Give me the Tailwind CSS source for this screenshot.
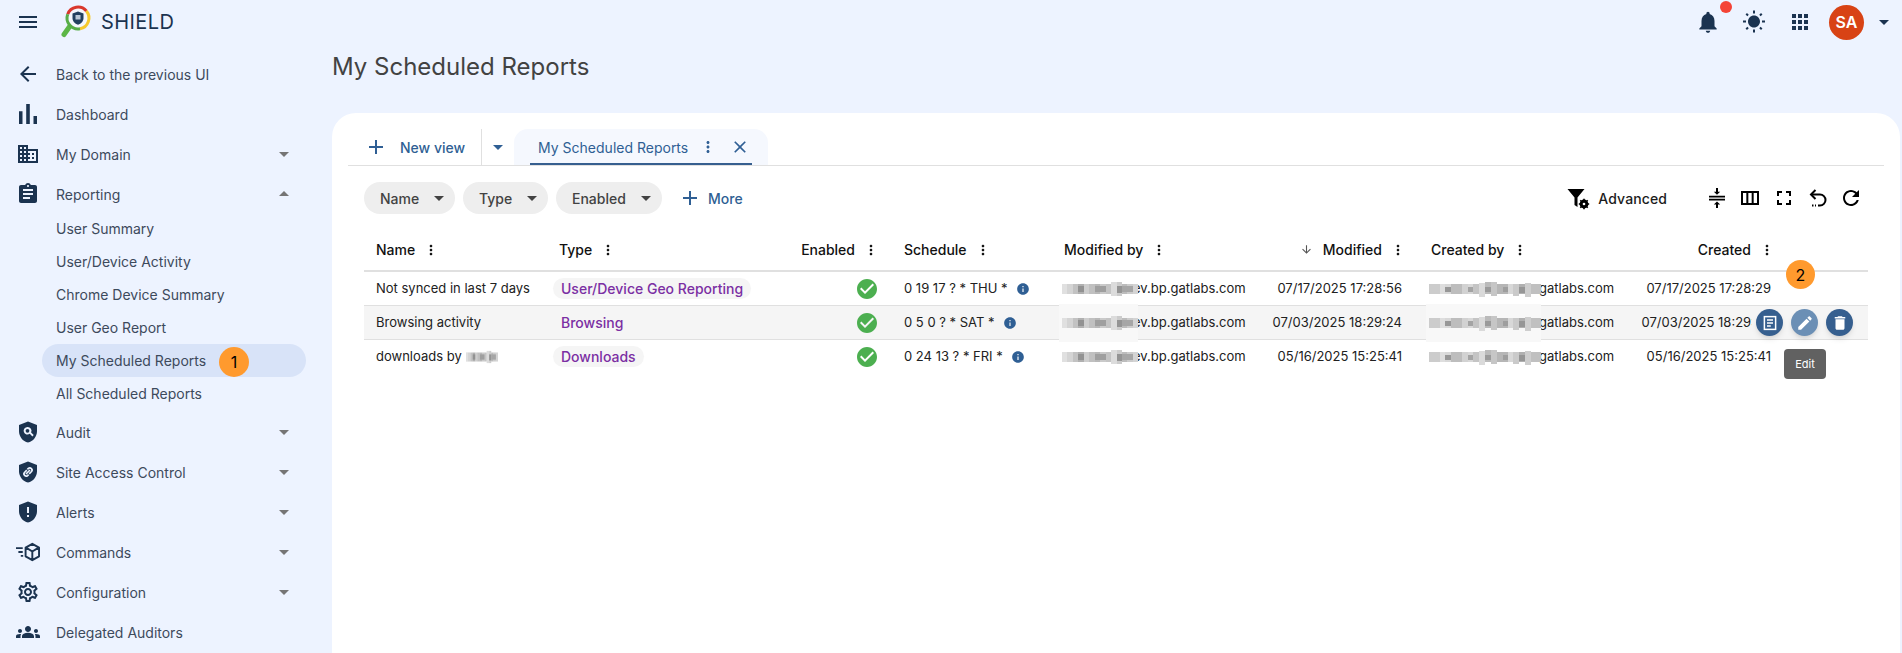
<!DOCTYPE html>
<html lang="en">
  <head>
    <meta charset="UTF-8" />
    <title>SHIELD - My Scheduled Reports</title>
    <script src="https://cdn.jsdelivr.net/npm/@tailwindcss/browser@4"></script>
  </head>
  <body class="h-[653px] overflow-hidden bg-[#edf3ff] font-['Inter','Noto_Sans',sans-serif] text-[#3d4a5c] antialiased">
    <!-- shared icons -->
    <svg class="hidden">
      <symbol id="kebab" viewBox="0 0 24 24"><path d="M12 8c1.100 0 2-.9 2-2s-.9-2-2-2-2 .9-2 2 .9 2 2 2zm0 2c-1.100 0-2 .9-2 2s.9 2 2 2 2-.9 2-2-.9-2-2-2zm0 6c-1.100 0-2 .9-2 2s.9 2 2 2 2-.9 2-2-.9-2-2-2z"/></symbol>
      <symbol id="caret" viewBox="0 0 24 24"><path d="M7 10l5 5 5-5z"/></symbol>
      <symbol id="caret-up" viewBox="0 0 24 24"><path d="M7 14l5-5 5 5z"/></symbol>
      <symbol id="plus" viewBox="0 0 24 24"><path d="M19 13h-6v6h-2v-6H5v-2h6V5h2v6h6v2z"/></symbol>
      <symbol id="check" viewBox="0 0 24 24"><path d="M12 2C6.480 2 2 6.480 2 12s4.480 10 10 10 10-4.480 10-10S17.520 2 12 2zm-2 15l-5-5 1.410-1.410L10 14.170l7.590-7.590L19 8l-9 9z"/></symbol>
      <symbol id="info" viewBox="0 0 24 24"><path d="M12 2C6.480 2 2 6.480 2 12s4.480 10 10 10 10-4.480 10-10S17.520 2 12 2zm1 15h-2v-6h2v6zm0-8h-2V7h2v2z"/></symbol>
      <!-- pixelated email blur -->
      <symbol id="blur-a" viewBox="0 0 76 16" preserveAspectRatio="none">
        <rect y="3" width="76" height="10" fill="#dcdcdc"/>
        <rect x="0" y="3" width="5" height="10" fill="#e0e0e0"/><rect x="5" y="3" width="6" height="10" fill="#d4d4d4"/><rect x="11" y="3" width="5" height="10" fill="#c2c2c2"/><rect x="16" y="3" width="6" height="10" fill="#b0b0b0"/><rect x="22" y="3" width="5" height="10" fill="#cecece"/><rect x="27" y="3" width="6" height="10" fill="#c0c0c0"/><rect x="33" y="3" width="5" height="10" fill="#b8b8b8"/><rect x="38" y="3" width="6" height="10" fill="#cacaca"/><rect x="44" y="3" width="5" height="10" fill="#c4c4c4"/><rect x="49" y="1" width="6" height="14" fill="#dcdcdc"/><rect x="55" y="1" width="5" height="14" fill="#cccccc"/><rect x="60" y="3" width="5" height="10" fill="#bcbcbc"/><rect x="65" y="3" width="6" height="10" fill="#cccccc"/><rect x="71" y="3" width="5" height="10" fill="#d4d4d4"/>
        <rect x="16" y="5" width="6" height="6" fill="#929292"/><rect x="33" y="5" width="11" height="6" fill="#9f9f9f"/><rect x="55" y="5" width="5" height="7" fill="#949494"/><rect x="60" y="5" width="11" height="6" fill="#a6a6a6"/>
      </symbol>
      <symbol id="blur-b" viewBox="0 0 112 16" preserveAspectRatio="none">
        <rect y="3" width="112" height="10" fill="#d8d8d8"/>
        <rect x="0" y="3" width="11" height="10" fill="#cccccc"/><rect x="11" y="3" width="5" height="10" fill="#dedede"/><rect x="22" y="3" width="11" height="10" fill="#bdbdbd"/><rect x="33" y="3" width="6" height="10" fill="#d2d2d2"/><rect x="44" y="3" width="6" height="10" fill="#c4c4c4"/><rect x="50" y="2" width="6" height="14" fill="#dadada"/><rect x="56" y="1" width="6" height="12" fill="#bababa"/><rect x="62" y="1" width="6" height="14" fill="#c6c6c6"/><rect x="68" y="3" width="11" height="10" fill="#b6b6b6"/><rect x="84" y="3" width="6" height="12" fill="#cacaca"/><rect x="90" y="3" width="6" height="10" fill="#b0b0b0"/><rect x="96" y="2" width="6" height="14" fill="#cecece"/><rect x="102" y="3" width="10" height="10" fill="#c0c0c0"/>
        <rect x="16" y="6" width="6" height="5" fill="#979797"/><rect x="39" y="6" width="5" height="5" fill="#a4a4a4"/><rect x="56" y="6" width="6" height="5" fill="#9a9a9a"/><rect x="74" y="6" width="5" height="5" fill="#9e9e9e"/><rect x="90" y="6" width="6" height="6" fill="#969696"/>
      </symbol>
    </svg>

    <!-- Top bar -->
    <header class="flex h-[44px] items-center pl-[16px] pr-[6px] text-[#1b3350]">
      <svg class="h-6 w-6" viewBox="0 0 24 24" fill="currentColor"><path d="M3 18h18v-2H3v2zm0-5h18v-2H3v2zm0-7v2h18V6H3z"/></svg>
      <!-- logo -->
      <svg class="ml-[20px] h-[34px] w-[34px]" viewBox="0 0 34 34" fill="none">
        <path d="M10 21L4 29.500" stroke="#5cb647" stroke-width="5" stroke-linecap="round"/>
        <circle cx="18" cy="13" r="10" fill="#f4f7fd"/>
        <path d="M7.700 9.200A11 11 0 0 1 26.400 6" stroke="#d9372c" stroke-width="3"/>
        <path d="M26.400 6A11 11 0 0 1 20 23.800" stroke="#f6c92c" stroke-width="3"/>
        <path d="M20 23.800A11 11 0 0 1 7.700 9.200" stroke="#57ad48" stroke-width="3"/>
        <path d="M18 6.500l5.500 2v4.500c0 3.300-2.300 5.700-5.500 6.700-3.200-1-5.500-3.400-5.500-6.700V8.500z" fill="#22405f"/>
        <rect x="15.500" y="10" width="5" height="4.500" fill="#b9c7d6"/>
      </svg>
      <span class="ml-[7px] text-[20px] leading-none tracking-[0.4px]">SHIELD</span>

      <div class="ml-auto flex items-center">
        <div class="relative">
          <svg class="h-[26px] w-[26px]" viewBox="0 0 24 24" fill="currentColor"><path d="M12 22c1.100 0 2-.9 2-2h-4c0 1.100.9 2 2 2zm6-6v-5c0-3.070-1.630-5.640-4.500-6.320V4c0-.83-.67-1.500-1.500-1.500s-1.500.67-1.500 1.500v.68C7.640 5.360 6 7.920 6 11v5l-2 2v1h16v-1l-2-2z"/></svg>
          <span class="absolute -right-[11px] -top-[8px] h-3 w-3 rounded-full bg-[#f44336]"></span>
        </div>
        <svg class="ml-[21px] h-6 w-6" viewBox="0 0 24 24" fill="currentColor"><path d="M6.760 4.840l-1.800-1.790-1.410 1.410 1.790 1.790 1.420-1.410zM4 10.500H1v2h3v-2zm9-9.950h-2V3.500h2V.55zm7.450 3.910l-1.410-1.410-1.790 1.790 1.410 1.410 1.790-1.790zm-3.210 13.700l1.790 1.800 1.410-1.410-1.800-1.790-1.400 1.400zM20 10.500v2h3v-2h-3zm-8-5c-3.310 0-6 2.690-6 6s2.690 6 6 6 6-2.690 6-6-2.690-6-6-6zm-1 16.950h2V19.500h-2v2.950zm-7.450-3.910l1.410 1.410 1.790-1.800-1.410-1.410-1.790 1.800z"/></svg>
        <svg class="ml-[22px] h-6 w-6" viewBox="0 0 24 24" fill="currentColor"><path d="M4 8h4V4H4v4zm6 12h4v-4h-4v4zm-6 0h4v-4H4v4zm0-6h4v-4H4v4zm6 0h4v-4h-4v4zm6-10v4h4V4h-4zm-6 4h4V4h-4v4zm6 6h4v-4h-4v4zm0 6h4v-4h-4v4z"/></svg>
        <div class="ml-[17px] flex h-[35px] w-[35px] items-center justify-center rounded-full bg-[#d84315] text-[16px] font-semibold text-white">SA</div>
        <svg class="ml-[8px] h-6 w-6 fill-current"><use href="#caret"/></svg>
      </div>
    </header>

    <div class="flex h-[609px]">
      <!-- Sidebar -->
      <aside class="w-[332px] shrink-0 pt-[10px] text-[14px]">
        <a class="flex h-10 items-center pl-[16px]"><svg class="h-6 w-6 text-[#1b3350]" viewBox="0 0 24 24" fill="currentColor"><path d="M20 11H7.830l5.590-5.590L12 4l-8 8 8 8 1.410-1.410L7.830 13H20v-2z"/></svg><span class="ml-[16px]">Back to the previous UI</span></a>
        <a class="flex h-10 items-center pl-[16px]"><svg class="h-6 w-6 text-[#1b3350]" viewBox="0 0 24 24" fill="currentColor"><path d="M3 9.200h3.500V22H3zM10.200 2h3.600v20h-3.600zM17.500 14H21v8h-3.500z"/></svg><span class="ml-[16px]">Dashboard</span></a>
        <a class="flex h-10 items-center pl-[16px]"><svg class="h-6 w-6 text-[#1b3350]" viewBox="0 0 24 24" fill="currentColor"><path d="M12 7V3H2v18h20V7H12zM6 19H4v-2h2v2zm0-4H4v-2h2v2zm0-4H4V9h2v2zm0-4H4V5h2v2zm4 12H8v-2h2v2zm0-4H8v-2h2v2zm0-4H8V9h2v2zm0-4H8V5h2v2zm10 12h-8v-2h2v-2h-2v-2h2v-2h-2V9h8v10zm-2-8h-2v2h2v-2zm0 4h-2v2h2v-2z"/></svg><span class="ml-[16px]">My Domain</span><svg class="ml-auto mr-[36px] h-6 w-6 fill-[#757575]"><use href="#caret"/></svg></a>
        <a class="flex h-10 items-center pl-[16px]"><svg class="h-6 w-6 text-[#1b3350]" viewBox="0 0 24 24" fill="currentColor"><path d="M19 3h-4.180C14.400 1.840 13.300 1 12 1c-1.300 0-2.400.84-2.820 2H5c-1.100 0-2 .9-2 2v14c0 1.100.9 2 2 2h14c1.100 0 2-.9 2-2V5c0-1.100-.9-2-2-2zm-7 0c.55 0 1 .45 1 1s-.45 1-1 1-1-.45-1-1 .45-1 1-1zm2 14H7v-2h7v2zm3-4H7v-2h10v2zm0-4H7V7h10v2z"/></svg><span class="ml-[16px]">Reporting</span><svg class="ml-auto mr-[36px] h-6 w-6 fill-[#757575]"><use href="#caret-up"/></svg></a>

        <div class="-mt-[2px] mb-[2px]">
          <a class="flex h-[33px] items-center pl-[56px]">User Summary</a>
          <a class="flex h-[33px] items-center pl-[56px]">User/Device Activity</a>
          <a class="flex h-[33px] items-center pl-[56px]">Chrome Device Summary</a>
          <a class="flex h-[33px] items-center pl-[56px]">User Geo Report</a>
          <a class="relative ml-[42px] flex h-[33px] w-[264px] items-center rounded-full bg-[#d8e3f8] pl-[14px]">My Scheduled Reports
            <span class="absolute left-[177px] top-[3px] flex h-[30px] w-[30px] items-center justify-center rounded-full bg-[#ff9a2e] text-[16px] text-black">1</span>
          </a>
          <a class="flex h-[33px] items-center pl-[56px]">All Scheduled Reports</a>
        </div>

        <a class="flex h-10 items-center pl-[16px]"><svg class="h-6 w-6 text-[#1b3350]" viewBox="0 0 24 24" fill="currentColor"><path fill-rule="evenodd" d="M12 1.500L3 5v6.200C3 16.500 6.800 21.400 12 22.500c5.200-1.100 9-6 9-11.300V5zM11.500 7a3.800 3.800 0 1 0 2.300 6.800l2.600 2.600 1.300-1.300-2.600-2.600A3.800 3.800 0 0 0 11.500 7zm0 1.900a1.900 1.900 0 1 1 0 3.800 1.900 1.900 0 0 1 0-3.800z"/></svg><span class="ml-[16px]">Audit</span><svg class="ml-auto mr-[36px] h-6 w-6 fill-[#757575]"><use href="#caret"/></svg></a>
        <a class="flex h-10 items-center pl-[16px]"><svg class="h-6 w-6 text-[#1b3350]" viewBox="0 0 24 24" fill="none"><path fill="currentColor" d="M12 1.500L3 5v6.200C3 16.500 6.800 21.400 12 22.500c5.200-1.100 9-6 9-11.300V5z"/><path stroke="#edf3ff" stroke-width="1.700" d="M10.800 10.200l-2.300 2.300a2.200 2.200 0 0 0 3.100 3.100l1-1M13.200 13.800l2.300-2.300a2.200 2.200 0 0 0-3.100-3.100l-1 1M10 14l4-4"/></svg><span class="ml-[16px]">Site Access Control</span><svg class="ml-auto mr-[36px] h-6 w-6 fill-[#757575]"><use href="#caret"/></svg></a>
        <a class="flex h-10 items-center pl-[16px]"><svg class="h-6 w-6 text-[#1b3350]" viewBox="0 0 24 24" fill="currentColor"><path fill-rule="evenodd" d="M12 1.500L3 5v6.200C3 16.500 6.800 21.400 12 22.500c5.200-1.100 9-6 9-11.300V5zM11 7h2v6h-2zm0 8h2v2h-2z"/></svg><span class="ml-[16px]">Alerts</span><svg class="ml-auto mr-[36px] h-6 w-6 fill-[#757575]"><use href="#caret"/></svg></a>
        <a class="flex h-10 items-center pl-[16px]"><svg class="h-6 w-6 text-[#1b3350]" viewBox="0 0 25 25" fill="none" stroke="currentColor" stroke-width="2"><path d="M0 8.500h7M2.500 12.500h4.500M5 16.500h2.500"/><path stroke-linejoin="round" d="M17 4l7 4v9l-7 4-7-4V8zM10.500 8l6.500 4 6.500-4M17 12v8.500"/></svg><span class="ml-[16px]">Commands</span><svg class="ml-auto mr-[36px] h-6 w-6 fill-[#757575]"><use href="#caret"/></svg></a>
        <a class="flex h-10 items-center pl-[16px]"><svg class="h-6 w-6 text-[#1b3350]" viewBox="0 0 24 24" fill="currentColor"><path d="M19.430 12.980c.04-.32.07-.64.07-.98 0-.34-.03-.66-.07-.98l2.110-1.650c.19-.15.24-.42.12-.64l-2-3.460c-.09-.16-.26-.25-.44-.25-.06 0-.12.01-.17.03l-2.490 1c-.52-.4-1.080-.73-1.690-.98l-.38-2.650C14.460 2.180 14.250 2 14 2h-4c-.25 0-.46.18-.49.42l-.38 2.650c-.61.25-1.170.59-1.690.98l-2.490-1c-.06-.02-.12-.03-.18-.03-.17 0-.34.09-.43.25l-2 3.460c-.13.22-.07.49.12.64l2.110 1.650c-.04.32-.07.65-.07.98 0 .33.03.66.07.98l-2.110 1.650c-.19.15-.24.42-.12.64l2 3.460c.09.16.26.25.44.25.06 0 .12-.01.17-.03l2.490-1c.52.4 1.080.73 1.690.98l.38 2.650c.03.24.24.42.49.42h4c.25 0 .46-.18.49-.42l.38-2.650c.61-.25 1.170-.59 1.690-.98l2.490 1c.06.02.12.03.18.03.17 0 .34-.09.43-.25l2-3.460c.12-.22.07-.49-.12-.64l-2.110-1.650zm-1.980-1.710c.04.31.05.52.05.73 0 .21-.02.43-.05.73l-.14 1.130.89.7 1.080.84-.7 1.210-1.270-.51-1.040-.42-.9.68c-.43.32-.84.56-1.250.73l-1.060.43-.16 1.130-.2 1.350h-1.400l-.19-1.350-.16-1.130-1.060-.43c-.43-.18-.83-.41-1.230-.71l-.91-.7-1.060.43-1.270.51-.7-1.210 1.080-.84.89-.7-.14-1.130c-.03-.31-.05-.54-.05-.74s.02-.43.05-.73l.14-1.130-.89-.7-1.080-.84.7-1.210 1.270.51 1.040.42.9-.68c.43-.32.84-.56 1.250-.73l1.060-.43.16-1.130.2-1.350h1.390l.19 1.350.16 1.130 1.060.43c.43.18.83.41 1.230.71l.91.7 1.060-.43 1.270-.51.7 1.210-1.070.85-.89.7.14 1.130zM12 8c-2.210 0-4 1.790-4 4s1.790 4 4 4 4-1.790 4-4-1.790-4-4-4zm0 6c-1.100 0-2-.9-2-2s.9-2 2-2 2 .9 2 2-.9 2-2 2z"/></svg><span class="ml-[16px]">Configuration</span><svg class="ml-auto mr-[36px] h-6 w-6 fill-[#757575]"><use href="#caret"/></svg></a>
        <a class="flex h-10 items-center pl-[16px]"><svg class="h-6 w-6 text-[#1b3350]" viewBox="0 0 24 24" fill="currentColor"><path d="M12 12.750c1.630 0 3.070.39 4.240.9 1.080.48 1.760 1.560 1.760 2.730V18H6v-1.610c0-1.180.68-2.260 1.760-2.730 1.170-.52 2.610-.91 4.240-.91zM4 13c1.100 0 2-.9 2-2s-.9-2-2-2-2 .9-2 2 .9 2 2 2zm1.130 1.100c-.37-.06-.74-.1-1.130-.1-.99 0-1.930.21-2.780.58C.48 14.900 0 15.620 0 16.430V18h4.500v-1.610c0-.83.23-1.610.63-2.290zM20 13c1.100 0 2-.9 2-2s-.9-2-2-2-2 .9-2 2 .9 2 2 2zm4 3.430c0-.81-.48-1.530-1.220-1.850-.85-.37-1.790-.58-2.780-.58-.39 0-.76.04-1.130.1.4.68.63 1.460.63 2.290V18H24v-1.570zM12 6c1.660 0 3 1.340 3 3s-1.340 3-3 3-3-1.340-3-3 1.340-3 3-3z"/></svg><span class="ml-[16px]">Delegated Auditors</span></a>
      </aside>

      <!-- Main -->
      <main class="min-w-0 flex-1 pr-[2px]">
        <h1 class="flex h-[69px] items-center pb-[23px] text-[24px] font-normal leading-none text-[#424242]">My Scheduled Reports</h1>

        <section class="h-[540px] rounded-t-[24px] bg-white px-[16px] pt-[16px]">
          <!-- Tabs -->
          <div class="flex h-[37px] items-stretch border-b border-[#e0e0e0] text-[14px] text-[#2f5f94]">
            <div class="flex items-center pl-[16px] pr-[16px]">
              <svg class="h-6 w-6 fill-current"><use href="#plus"/></svg>
              <span class="ml-[12px] font-[450]">New view</span>
            </div>
            <div class="flex w-[33px] items-center justify-center border-l border-[#e0e0e0]"><svg class="h-6 w-6 fill-current"><use href="#caret"/></svg></div>
            <div class="relative flex w-[254px] items-center rounded-t-[14px] bg-[#f5f8fe] pl-[24px]">
              <span>My Scheduled Reports</span>
              <svg class="ml-[11px] h-[18px] w-[18px] fill-current"><use href="#kebab"/></svg>
              <svg class="ml-[13px] h-5 w-5" viewBox="0 0 24 24" fill="currentColor"><path d="M19 6.410L17.590 5 12 10.590 6.410 5 5 6.410 10.590 12 5 17.590 6.410 19 12 13.410 17.590 19 19 17.590 13.410 12z"/></svg>
              <span class="absolute bottom-0 left-[16px] right-[16px] h-[2px] bg-[#365f8f]"></span>
            </div>
          </div>

          <!-- Filters -->
          <div class="mt-[16px] flex h-[32px] items-center pl-[16px] pr-[21px] text-[14px]">
            <button class="flex h-[32px] w-[91px] items-center rounded-full bg-[#eeeeee] pl-[16px] font-[450] text-[#424242]">Name<svg class="ml-auto mr-[4px] h-6 w-6 fill-current"><use href="#caret"/></svg></button>
            <button class="ml-[8px] flex h-[32px] w-[85px] items-center rounded-full bg-[#eeeeee] pl-[16px] font-[450] text-[#424242]">Type<svg class="ml-auto mr-[4px] h-6 w-6 fill-current"><use href="#caret"/></svg></button>
            <button class="ml-[8px] flex h-[32px] w-[106px] items-center rounded-full bg-[#eeeeee] pl-[16px] font-[450] text-[#424242]">Enabled<svg class="ml-auto mr-[4px] h-6 w-6 fill-current"><use href="#caret"/></svg></button>
            <div class="ml-[16px] flex items-center font-[450] text-[#2f5f94]"><svg class="h-6 w-6 fill-current"><use href="#plus"/></svg><span class="ml-[6px]">More</span></div>

            <div class="ml-auto flex items-center text-black">
              <svg class="h-[24px] w-[24px]" viewBox="0 0 24 24" fill="currentColor"><path d="M1.500 3h17l-7 8.500V21l-3-2v-7.500z"/><circle cx="18" cy="18" r="3.200" fill="none" stroke="currentColor" stroke-width="2.400"/><path stroke="currentColor" stroke-width="1.600" d="M18 12.800v10.400M12.800 18h10.400M14.300 14.300l7.400 7.400M21.700 14.300l-7.400 7.400"/><circle cx="18" cy="18" r="1.300" fill="#fff"/></svg>
              <span class="ml-[8px] text-[14px] font-[450] tracking-[0.1px] text-[#1c1c1c]">Advanced</span>
              <svg class="ml-[38px] h-6 w-6" viewBox="0 0 24 24" fill="currentColor"><path d="M4 9.800h16v1.700H4zM4 12.800h16v1.700H4zM12 8.800L8.800 5.800h2.200V2h2v3.800h2.200zM12 15.500l3.200 3H13V22h-2v-3.500H8.800z"/></svg>
              <svg class="ml-[9px] h-6 w-6" viewBox="0 0 24 24" fill="currentColor"><path d="M3 5v14h18V5H3zm5.330 12H5V7h3.330v10zm5.340 0h-3.330V7h3.330v10zM19 17h-3.330V7H19v10z"/></svg>
              <svg class="ml-[10px] h-6 w-6" viewBox="0 0 24 24" fill="currentColor"><path d="M7 14H5v5h5v-2H7v-3zm-2-4h2V7h3V5H5v5zm12 7h-3v2h5v-5h-2v3zM14 5v2h3v3h2V5h-5z"/></svg>
              <svg class="ml-[10px] h-6 w-6" viewBox="0 0 24 24" fill="none" stroke="currentColor" stroke-width="2"><path d="M9.500 4L5 8.500 9.500 13"/><path d="M5 8.500h9a5.500 5.500 0 0 1 0 11h-2" /><path d="M6 19.500h1.500M9 19.500h1" /></svg>
              <svg class="ml-[9px] h-6 w-6" viewBox="0 0 24 24" fill="currentColor"><path d="M17.650 6.350C16.200 4.900 14.210 4 12 4c-4.420 0-7.990 3.580-7.990 8s3.570 8 7.990 8c3.730 0 6.840-2.550 7.730-6h-2.080c-.82 2.330-3.040 4-5.650 4-3.310 0-6-2.690-6-6s2.690-6 6-6c1.660 0 3.140.69 4.220 1.780L13 11h7V4l-2.350 2.350z"/></svg>
            </div>
          </div>

          <!-- Table -->
          <div class="relative mx-[16px] mt-[15px] text-[13px] text-[#212121]">
            <div class="grid h-[43px] grid-cols-[183px_232px_113px_160px_200px_167px_204px_160px_85px] items-center border-b-2 border-[#e0e0e0] text-[14px] font-[450] text-[#111]">
              <div class="flex items-center gap-[8px] pl-[12px]">Name<svg class="h-4 w-4 fill-current"><use href="#kebab"/></svg></div>
              <div class="flex items-center gap-[8px] pl-[12px]">Type<svg class="h-4 w-4 fill-current"><use href="#kebab"/></svg></div>
              <div class="flex items-center justify-end gap-[8px] pr-[13px]">Enabled<svg class="h-4 w-4 fill-current"><use href="#kebab"/></svg></div>
              <div class="flex items-center gap-[8px] pl-[12px]">Schedule<svg class="h-4 w-4 fill-current"><use href="#kebab"/></svg></div>
              <div class="flex items-center gap-[8px] pl-[12px]">Modified by<svg class="h-4 w-4 fill-current"><use href="#kebab"/></svg></div>
              <div class="flex items-center justify-end gap-[8px] pr-[13px]"><svg class="mr-[2px] h-[13px] w-[13px]" viewBox="0 0 24 24" fill="#555"><path d="M20 12l-1.410-1.410L13 16.170V4h-2v12.170l-5.580-5.590L4 12l8 8 8-8z"/></svg>Modified<svg class="h-4 w-4 fill-current"><use href="#kebab"/></svg></div>
              <div class="flex items-center gap-[8px] pl-[12px]">Created by<svg class="h-4 w-4 fill-current"><use href="#kebab"/></svg></div>
              <div class="flex items-center justify-end gap-[8px] pr-[8px]">Created<svg class="h-4 w-4 fill-current"><use href="#kebab"/></svg></div>
              <div></div>
            </div>

            <div class="grid h-[34px] grid-cols-[183px_232px_113px_160px_200px_167px_204px_160px_85px] items-center border-b border-[#e0e0e0]">
              <div class="pl-[12px]">Not synced in last 7 days</div>
              <div class="pl-[6px]"><span class="inline-flex h-[21px] items-center rounded-full bg-[#f5f5f5] px-[8px] text-[14px] font-[450] text-[#7b2fa3]">User/Device Geo Reporting</span></div>
              <div class="flex justify-end pr-[13px]"><svg class="h-6 w-6 fill-[#4caf50]"><use href="#check"/></svg></div>
              <div class="flex items-center gap-[8px] pl-[12px]">0 19 17 ? * THU *<svg class="h-[14px] w-[14px] fill-[#2f5f94]"><use href="#info"/></svg></div>
              <div class="flex items-center pl-[10px]"><svg class="relative h-4 w-[76px]"><use href="#blur-a"/></svg><span class="-ml-[5px]">ev.bp.gatlabs.com</span></div>
              <div class="pr-[17px] text-right">07/17/2025 17:28:56</div>
              <div class="flex items-center pl-[10px]"><svg class="relative h-4 w-[112px]"><use href="#blur-b"/></svg><span class="-ml-[2px]">gatlabs.com</span></div>
              <div class="pr-[12px] text-right">07/17/2025 17:28:29</div>
              <div></div>
            </div>

            <div class="relative grid h-[34px] grid-cols-[183px_232px_113px_160px_200px_167px_204px_160px_85px] items-center border-b border-[#e0e0e0] bg-[#f5f5f5]">
              <div class="pl-[12px]">Browsing activity</div>
              <div class="pl-[6px]"><span class="inline-flex h-[21px] items-center rounded-full bg-[#f5f5f5] px-[8px] text-[14px] font-[450] text-[#7b2fa3]">Browsing</span></div>
              <div class="flex justify-end pr-[13px]"><svg class="h-6 w-6 fill-[#4caf50]"><use href="#check"/></svg></div>
              <div class="flex items-center gap-[8px] pl-[12px]">0 5 0 ? * SAT *<svg class="h-[14px] w-[14px] fill-[#2f5f94]"><use href="#info"/></svg></div>
              <div class="relative flex items-center pl-[10px]"><span class="absolute left-[7px] top-1/2 h-[38px] w-[79px] -translate-y-1/2 bg-[#f8f8f8]"></span><svg class="relative h-4 w-[76px]"><use href="#blur-a"/></svg><span class="-ml-[5px]">ev.bp.gatlabs.com</span></div>
              <div class="pr-[17px] text-right">07/03/2025 18:29:24</div>
              <div class="relative flex items-center pl-[10px]"><span class="absolute left-[7px] top-1/2 h-[38px] w-[115px] -translate-y-1/2 bg-[#f8f8f8]"></span><svg class="relative h-4 w-[112px]"><use href="#blur-b"/></svg><span class="-ml-[2px]">gatlabs.com</span></div>
              <div class="pr-[12px] text-right">07/03/2025 18:29:24</div>
              <div></div>
              <!-- row actions, shown on hover -->
              <div class="absolute bottom-0 right-0 top-0 flex w-[116px] items-center gap-[8px] bg-[#f5f5f5] pl-[4px]">
                <span class="flex h-[27px] w-[27px] items-center justify-center rounded-full bg-[#365f8f] shadow-md"><svg class="h-[18px] w-[18px]" viewBox="0 0 24 24" fill="none" stroke="#fff" stroke-width="2"><rect x="4.500" y="3.500" width="15" height="17"/><path d="M8 8h8M8 12h8M8 16h5"/></svg></span>
                <span class="flex h-[27px] w-[27px] items-center justify-center rounded-full bg-[#6b8fb5] shadow-md"><svg class="h-[18px] w-[18px]" viewBox="0 0 24 24" fill="#fff"><path d="M3 17.250V21h3.750L17.810 9.940l-3.750-3.750L3 17.250zM20.710 7.040c.39-.39.39-1.020 0-1.410l-2.340-2.340c-.39-.39-1.020-.39-1.410 0l-1.830 1.830 3.750 3.750 1.830-1.830z"/></svg></span>
                <span class="flex h-[27px] w-[27px] items-center justify-center rounded-full bg-[#365f8f] shadow-md"><svg class="h-[18px] w-[18px]" viewBox="0 0 24 24" fill="#fff"><path d="M6 19c0 1.100.9 2 2 2h8c1.100 0 2-.9 2-2V7H6v12zM19 4h-3.500l-1-1h-5l-1 1H5v2h14V4z"/></svg></span>
              </div>
            </div>

            <div class="grid h-[34px] grid-cols-[183px_232px_113px_160px_200px_167px_204px_160px_85px] items-center">
              <div class="flex items-center pl-[12px]">downloads by <svg class="ml-[4px] h-[14px] w-[32px]"><use href="#blur-a"/></svg></div>
              <div class="pl-[6px]"><span class="inline-flex h-[21px] items-center rounded-full bg-[#f5f5f5] px-[8px] text-[14px] font-[450] text-[#7b2fa3]">Downloads</span></div>
              <div class="flex justify-end pr-[13px]"><svg class="h-6 w-6 fill-[#4caf50]"><use href="#check"/></svg></div>
              <div class="flex items-center gap-[8px] pl-[12px]">0 24 13 ? * FRI *<svg class="h-[14px] w-[14px] fill-[#2f5f94]"><use href="#info"/></svg></div>
              <div class="flex items-center pl-[10px]"><svg class="relative h-4 w-[76px]"><use href="#blur-a"/></svg><span class="-ml-[5px]">ev.bp.gatlabs.com</span></div>
              <div class="pr-[17px] text-right">05/16/2025 15:25:41</div>
              <div class="flex items-center pl-[10px]"><svg class="relative h-4 w-[112px]"><use href="#blur-b"/></svg><span class="-ml-[2px]">gatlabs.com</span></div>
              <div class="pr-[12px] text-right">05/16/2025 15:25:41</div>
              <div></div>
            </div>

            <!-- tooltip and callout over the table -->
            <div class="absolute left-[1420px] top-[120px] flex h-[30px] w-[42px] items-center justify-center rounded-[4px] bg-[#616161] text-[11px] text-white">Edit</div>
            <div class="absolute left-[1422px] top-[31px] flex h-[29px] w-[29px] items-center justify-center rounded-full bg-[#ff9a2e] text-[16px] text-black">2</div>
          </div>
        </section>
      </main>
    </div>
  </body>
</html>
